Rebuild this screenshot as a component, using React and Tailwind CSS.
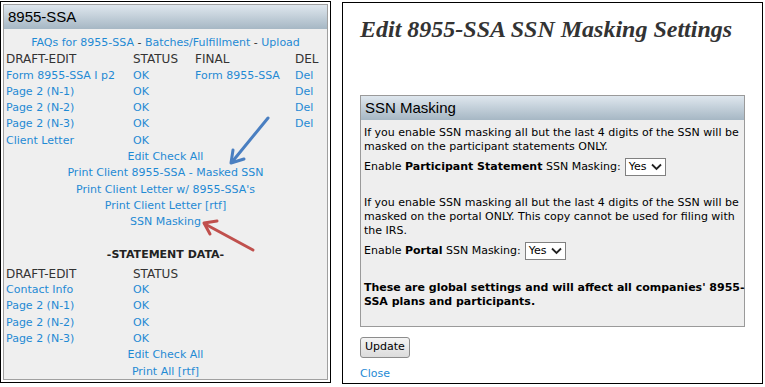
const link = 'text-[#1f8ad4]'

const draftRows = [
  { name: 'Form 8955-SSA I p2', status: 'OK', final: 'Form 8955-SSA', del: 'Del' },
  { name: 'Page 2 (N-1)', status: 'OK', final: '', del: 'Del' },
  { name: 'Page 2 (N-2)', status: 'OK', final: '', del: 'Del' },
  { name: 'Page 2 (N-3)', status: 'OK', final: '', del: 'Del' },
  { name: 'Client Letter', status: 'OK', final: '', del: '' },
]

const statementRows = ['Contact Info', 'Page 2 (N-1)', 'Page 2 (N-2)', 'Page 2 (N-3)']

function YesSelect() {
  return (
    <span className="inline-flex h-[18px] items-center gap-[5px] border border-[#808080] bg-white pl-[3px] pr-[3px] align-middle text-black">
      Yes
      <svg width="11" height="8" viewBox="0 0 11 8">
        <path d="M1 1.5 L5.5 6 L10 1.5" fill="none" stroke="#222" strokeWidth="1.8" />
      </svg>
    </span>
  )
}

function PanelHeader({ children }) {
  return (
    <div className="flex h-[24px] items-center bg-gradient-to-b from-[#dfe7ee] to-[#a6b7c4] pl-[4px] font-['Liberation_Sans',Arial,sans-serif] text-[15px] text-black">
      {children}
    </div>
  )
}

function LeftPanel() {
  return (
    <div className="mt-[1px] h-[382px] w-[331px] border border-black bg-white p-[2px]">
      <div className="h-full border border-[#a0a0a0] bg-[#efefef]">
        <PanelHeader>8955-SSA</PanelHeader>
        <div className="px-[2px] pt-[6px] font-['DejaVu_Sans',Verdana,sans-serif] text-[11px] leading-[16.3px]">
          <div className="text-center text-[#333]">
            <span className={link}>FAQs for 8955-SSA</span> - <span className={link}>Batches/Fulfillment</span> - <span className={link}>Upload</span>
          </div>
          <div className="grid grid-cols-[127px_62px_100px_1fr] text-[12px] text-[#333]">
            <span>DRAFT-EDIT</span>
            <span>STATUS</span>
            <span>FINAL</span>
            <span>DEL</span>
          </div>
          {draftRows.map((r) => (
            <div key={r.name} className={`grid grid-cols-[127px_62px_100px_1fr] ${link}`}>
              <span>{r.name}</span>
              <span>{r.status}</span>
              <span>{r.final}</span>
              <span>{r.del}</span>
            </div>
          ))}
          <div className={`flex flex-col items-center ${link}`}>
            <span>Edit Check All</span>
            <span>Print Client 8955-SSA - Masked SSN</span>
            <span>Print Client Letter w/ 8955-SSA's</span>
            <span>Print Client Letter [rtf]</span>
            <span>SSN Masking</span>
          </div>
          <div className="mt-[16px] text-center font-bold text-[#222]">-STATEMENT DATA-</div>
          <div className="mt-[3px] grid grid-cols-[127px_1fr] text-[12px] text-[#333]">
            <span>DRAFT-EDIT</span>
            <span>STATUS</span>
          </div>
          {statementRows.map((name, i) => (
            <div key={i} className={`grid grid-cols-[127px_1fr] ${link}`}>
              <span>{name}</span>
              <span>OK</span>
            </div>
          ))}
          <div className={`flex flex-col items-center ${link}`}>
            <span>Edit Check All</span>
            <span>Print All [rtf]</span>
          </div>
        </div>
      </div>
    </div>
  )
}

function RightPanel() {
  return (
    <div className="mt-[2px] h-[382px] w-[421px] border border-black bg-white px-[17px]">
      <h1 className="mt-[11px] font-['Liberation_Serif','Times_New_Roman',serif] text-[24px] font-bold italic leading-[30px] text-[#333]">
        Edit 8955-SSA SSN Masking Settings
      </h1>
      <div className="mt-[51px] h-[232px] border border-[#9a9a9a] bg-[#eeeeee]">
        <PanelHeader>SSN Masking</PanelHeader>
        <div className="px-[3px] pt-[6px] font-['DejaVu_Sans',Verdana,sans-serif] text-[11px] leading-[14px] text-black">
          <p>If you enable SSN masking all but the last 4 digits of the SSN will be masked on the participant statements ONLY.</p>
          <div className="mt-[4px] flex items-center gap-[4px]">
            <span>
              Enable <b>Participant Statement</b> SSN Masking:
            </span>
            <YesSelect />
          </div>
          <p className="mt-[20px]">
            If you enable SSN masking all but the last 4 digits of the SSN will be masked on the portal ONLY. This copy cannot be used for filing with the IRS.
          </p>
          <div className="mt-[4px] flex items-center gap-[4px]">
            <span>
              Enable <b>Portal</b> SSN Masking:
            </span>
            <YesSelect />
          </div>
          <p className="mt-[21px] font-bold">
            <span className="whitespace-nowrap">These are global settings and will affect all companies' 8955-</span>
            <br />
            SSA plans and participants.
          </p>
        </div>
      </div>
      <button className="mt-[10px] h-[21px] rounded-[3px] border border-[#8c8c8c] bg-gradient-to-b from-[#f4f4f4] to-[#dcdcdc] px-[4px] font-['DejaVu_Sans',Verdana,sans-serif] text-[11px] text-black">
        Update
      </button>
      <div className={`mt-[8px] font-['DejaVu_Sans',Verdana,sans-serif] text-[11px] ${link}`}>Close</div>
    </div>
  )
}

export default function App() {
  return (
    <div className="relative h-[387px] w-[765px] overflow-hidden bg-white">
      <div className="flex items-start gap-[11px]">
        <LeftPanel />
        <RightPanel />
      </div>
      <svg className="pointer-events-none absolute left-0 top-0" width="765" height="387">
        <g fill="none" strokeLinecap="round" strokeLinejoin="round" strokeWidth="3">
          <line x1="268" y1="118" x2="232" y2="162" stroke="#4a7fc1" />
          <polyline points="233,150 231,163 244,159" stroke="#4a7fc1" />
          <line x1="253" y1="250" x2="205" y2="224" stroke="#c0504d" />
          <polyline points="217,221 204,223 210,234" stroke="#c0504d" />
        </g>
      </svg>
    </div>
  )
}
